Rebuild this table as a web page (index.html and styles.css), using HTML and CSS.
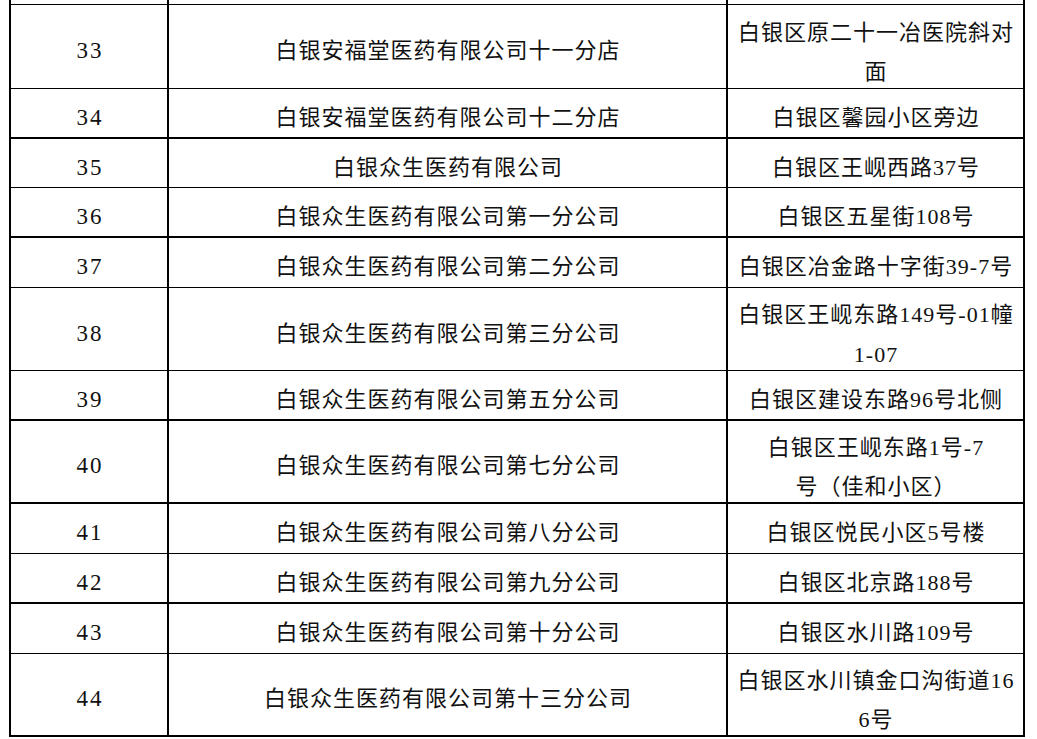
FILE: index.html
```html
<!DOCTYPE html>
<html lang="zh-CN">
<head>
<meta charset="utf-8">
<title>药店名单</title>
<link rel="stylesheet" href="styles.css">
</head>
<body>
<table class="list">
  <colgroup>
    <col class="col-no">
    <col class="col-name">
    <col class="col-addr">
  </colgroup>
  <tbody>
    <tr class="row-cut"><td></td><td></td><td></td></tr>
    <tr class="row-tall"><td class="no">33</td><td>白银安福堂医药有限公司十一分店</td><td><div class="two">白银区原二十一冶医院斜对<br>面</div></td></tr>
    <tr class="row-std thick"><td class="no">34</td><td>白银安福堂医药有限公司十二分店</td><td>白银区馨园小区旁边</td></tr>
    <tr class="row-short"><td class="no">35</td><td>白银众生医药有限公司</td><td>白银区王岘西路37号</td></tr>
    <tr class="row-std thick"><td class="no">36</td><td>白银众生医药有限公司第一分公司</td><td>白银区五星街108号</td></tr>
    <tr class="row-std"><td class="no">37</td><td>白银众生医药有限公司第二分公司</td><td>白银区冶金路十字街39-7号</td></tr>
    <tr class="row-double"><td class="no">38</td><td>白银众生医药有限公司第三分公司</td><td><div class="two">白银区王岘东路149号-01幢<br>1-07</div></td></tr>
    <tr class="row-std thick"><td class="no">39</td><td>白银众生医药有限公司第五分公司</td><td>白银区建设东路96号北侧</td></tr>
    <tr class="row-double thick"><td class="no">40</td><td>白银众生医药有限公司第七分公司</td><td><div class="two">白银区王岘东路1号-7<br>号（佳和小区）</div></td></tr>
    <tr class="row-std"><td class="no">41</td><td>白银众生医药有限公司第八分公司</td><td>白银区悦民小区5号楼</td></tr>
    <tr class="row-std thick"><td class="no">42</td><td>白银众生医药有限公司第九分公司</td><td>白银区北京路188号</td></tr>
    <tr class="row-std"><td class="no">43</td><td>白银众生医药有限公司第十分公司</td><td>白银区水川路109号</td></tr>
    <tr class="row-double thick"><td class="no">44</td><td>白银众生医药有限公司第十三分公司</td><td><div class="two">白银区水川镇金口沟街道16<br>6号</div></td></tr>
  </tbody>
</table>
</body>
</html>
```

FILE: styles.css
```css
html, body {
  margin: 0;
  padding: 0;
  background: #ffffff;
}

body {
  font-family: "Liberation Serif", "Noto Sans CJK SC", serif;
  font-size: 22px;
  letter-spacing: 1px;
  color: #111111;
}

.list {
  margin-left: 9px;
  width: 1016px;
  table-layout: fixed;
  border-collapse: separate;
  border-spacing: 0;
  border-left: 2px solid #000;
}

.col-no { width: 158px; }
.col-name { width: 559px; }
.col-addr { width: 297px; }

.list td {
  padding: 8px 0 0 1px;
  border-right: 2px solid #000;
  border-bottom: 1px solid #000;
  text-align: center;
  vertical-align: middle;
  line-height: 39px;
  white-space: nowrap;
  overflow: visible;
}

.list td.no {
  font-size: 23px;
  letter-spacing: 2px;
  padding-left: 2px;
}

.list .thick td {
  border-bottom-width: 2px;
}

.list .row-cut td {
  padding: 0;
  line-height: 0;
}

.row-cut { height: 5px; }
.row-tall { height: 84px; }
.row-double { height: 83px; }
.row-std { height: 50px; }
.row-short { height: 49px; }

.two {
  margin: -2px 0 -5px 0;
  line-height: 39.5px;
}
```
